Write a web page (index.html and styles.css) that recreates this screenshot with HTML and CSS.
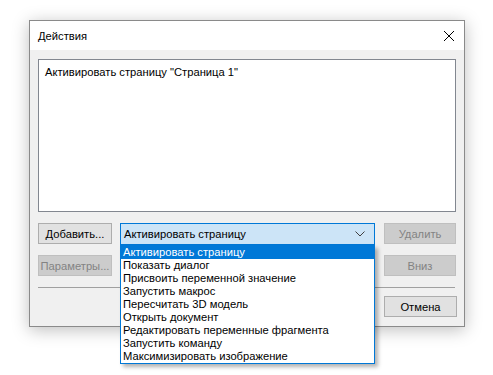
FILE: index.html
```html
<!DOCTYPE html>
<html lang="ru">
<head>
  <meta charset="UTF-8">
  <title>Действия</title>
  <link rel="stylesheet" href="styles.css">
</head>
<body>
  <div class="dialog">
    <div class="titlebar">
      <span class="title">Действия</span>
      <svg class="close" width="12" height="12" viewBox="0 0 12 12">
        <path d="M1 1 L11 11 M11 1 L1 11" stroke="#000" stroke-width="1" fill="none"/>
      </svg>
    </div>

    <div class="client">
      <div class="listbox">
        <div class="list-item">Активировать страницу "Страница 1"</div>
      </div>

      <div class="row">
        <button class="btn">Добавить...</button>
        <div class="combo">
          <span class="combo-text">Активировать страницу</span>
          <svg class="chevron" width="10" height="6" viewBox="0 0 10 6">
            <path d="M0.5 0.5 L5 5 L9.5 0.5" stroke="#404040" stroke-width="1" fill="none"/>
          </svg>
          <div class="dropdown">
            <div class="option selected">Активировать страницу</div>
            <div class="option">Показать диалог</div>
            <div class="option">Присвоить переменной значение</div>
            <div class="option">Запустить макрос</div>
            <div class="option">Пересчитать 3D модель</div>
            <div class="option">Открыть документ</div>
            <div class="option">Редактировать переменные фрагмента</div>
            <div class="option">Запустить команду</div>
            <div class="option">Максимизировать изображение</div>
          </div>
        </div>
        <button class="btn" disabled>Удалить</button>
      </div>

      <div class="row row-second">
        <button class="btn" disabled>Параметры...</button>
        <div></div>
        <button class="btn" disabled>Вниз</button>
      </div>

      <div class="separator"></div>

      <div class="row row-end">
        <button class="btn">Отмена</button>
      </div>
    </div>
  </div>
</body>
</html>
```

FILE: styles.css
```css
html, body {
  height: 375px;
}
body {
  margin: 0;
  padding-top: 20px;
  box-sizing: border-box;
  background: #ffffff;
  font-family: "Liberation Sans", Arial, sans-serif;
  font-size: 11.2px;
  color: #000;
}
.dialog {
  margin: 0 0 0 29px;
  width: 434px;
  border: 1px solid #8a8a8a;
  background: #f0f0f0;
  box-shadow: 0 3px 16px rgba(0, 0, 0, 0.26);
}
.titlebar {
  height: 29px;
  background: #ffffff;
  display: flex;
  align-items: center;
  justify-content: space-between;
  padding: 0 9px 0 8px;
}
.close {
  margin-top: 1px;
}
.client {
  padding: 9px 8px 9px 8px;
}
.listbox {
  width: 416px;
  height: 151px;
  background: #ffffff;
  border: 1px solid #828790;
}
.list-item {
  padding: 4px 0 0 6px;
  line-height: 16px;
}
.row {
  display: grid;
  grid-template-columns: 74px 255px 73px;
  column-gap: 8px;
  align-items: start;
  margin-top: 11px;
  height: 22px;
}
.row > :last-child {
  margin-left: 1px;
}
.row-second {
  margin-top: 10px;
  height: 21px;
}
.row-end {
  display: flex;
  justify-content: flex-end;
  margin-top: 8px;
  margin-right: -1px;
  height: 21px;
}
.btn {
  height: 21px;
  margin: 0;
  padding: 0;
  background: #e1e1e1;
  border: 1px solid #adadad;
  font-family: inherit;
  font-size: 11.2px;
  color: #000;
}
.row-end .btn {
  width: 73px;
}
.btn:disabled {
  background: #cccccc;
  border-color: #bfbfbf;
  color: #838383;
}
.combo {
  position: relative;
  height: 22px;
  box-sizing: border-box;
  background: #cce4f7;
  border: 1px solid #0078d7;
  display: flex;
  align-items: center;
  justify-content: space-between;
  padding: 0 9px 0 3px;
}
.dropdown {
  position: absolute;
  left: -1px;
  top: 21px;
  width: 253px;
  background: #ffffff;
  border: 1px solid #0078d7;
  box-shadow: 3px 3px 4px rgba(0, 0, 0, 0.3);
  z-index: 10;
}
.option {
  height: 13px;
  line-height: 13px;
  padding-left: 2px;
  white-space: nowrap;
}
.option.selected {
  background: #0078d7;
  color: #ffffff;
}
.separator {
  margin-top: 11px;
  width: 417px;
  height: 1px;
  background: #a0a0a0;
}
```
